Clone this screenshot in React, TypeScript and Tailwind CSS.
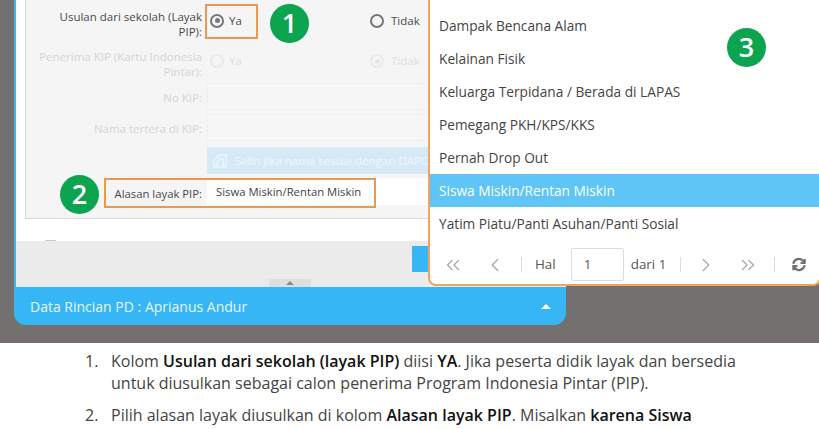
import React from "react";
import { ChevronLeft, ChevronRight, ChevronsLeft, ChevronsRight } from "lucide-react";

const FONT = "font-['Open_Sans','Noto_Sans',sans-serif]";

function Radio({ on, faded }: { on?: boolean; faded?: boolean }) {
  return (
    <span className={`flex h-[14px] w-[14px] shrink-0 items-center justify-center rounded-full border-2 ${faded ? "border-[#e9e9e9]" : "border-[#777777]"}`}>
      {on && <span className={`h-[5px] w-[5px] rounded-full ${faded ? "bg-[#e6e6e6]" : "bg-[#777777]"}`} />}
    </span>
  );
}

function Badge({ n, className }: { n: string; className: string }) {
  return (
    <div className={`absolute flex h-[39px] w-[39px] items-center justify-center rounded-full bg-[#0da44f] text-[27px] font-semibold text-white ${className}`}>
      {n}
    </div>
  );
}

function Row({ label, h, pt = "pt-[2px]", children, faded }: { label: React.ReactNode; h: string; pt?: string; children?: React.ReactNode; faded?: boolean }) {
  return (
    <div className={`flex items-center ${h}`}>
      <div className={`w-[176px] shrink-0 text-right text-[11.5px] leading-[15px] ${pt} ${faded ? "text-[#d4d4d4]" : "text-[#4a4a4a]"}`}>{label}</div>
      <div className="ml-[5px] flex-1 self-stretch">{children}</div>
    </div>
  );
}

const items = [
  "Dampak Bencana Alam",
  "Kelainan Fisik",
  "Keluarga Terpidana / Berada di LAPAS",
  "Pemegang PKH/KPS/KKS",
  "Pernah Drop Out",
  "Siswa Miskin/Rentan Miskin",
  "Yatim Piatu/Panti Asuhan/Panti Sosial",
];

function Sep() {
  return <span className="block h-[15px] w-px shrink-0 bg-[#dcdcdc]" />;
}

export default function App() {
  return (
    <div className={`relative h-[429px] w-[819px] overflow-hidden bg-white ${FONT}`}>
      <div className="relative h-[343px] bg-[#757070] pl-[14px]">
        <div className="flex h-[325px] w-[552px] flex-col overflow-hidden rounded-b-[12px] bg-[#36b6f4]">
          <div className="relative ml-[2px] h-[241px] bg-white pl-[9px]">
            <div className="h-[219px] border-b border-l border-[#d9d9d9] bg-[#f5f5f5]">
              <Row pt="pt-[5px]" label={<>Usulan dari sekolah (Layak<br />PIP):</>} h="h-[42px]">
                <div className="flex h-full items-center pb-[1px] pl-[3px] text-[11.5px] text-[#4a4a4a]">
                  <Radio on />
                  <span className="ml-[5px] w-[141px]">Ya</span>
                  <Radio />
                  <span className="ml-[7px]">Tidak</span>
                </div>
              </Row>
              <Row faded pt="pt-[4px]" label={<>Penerima KIP (Kartu Indonesia<br />Pintar):</>} h="h-[40px]">
                <div className="flex h-full items-center pb-[2px] pl-[3px] text-[11.5px] text-[#e0e0e0]">
                  <Radio faded />
                  <span className="ml-[5px] w-[141px]">Ya</span>
                  <Radio on faded />
                  <span className="ml-[7px]">Tidak</span>
                </div>
              </Row>
              <Row faded label="No KIP:" h="mt-[1px] h-[27px]">
                <div className="h-full border border-[#efefef] bg-[#f6f6f6]" />
              </Row>
              <Row faded label="Nama tertera di KIP:" h="mt-[4px] h-[27px]">
                <div className="h-full border border-[#efefef] bg-[#f6f6f6]" />
              </Row>
              <Row label="" h="mt-[6px] h-[27px]">
                <div className="flex h-full items-center bg-[#d5eaf6] pl-[6px] text-[11.5px] text-[#eef7fc]">
                  <svg width="15" height="15" viewBox="0 0 15 15" fill="none" stroke="#eef7fc" strokeWidth="1.3"><path d="M1 7 L6 2 H13 V14 H1 Z M4 14 V9 L7 6 H10 V14" /></svg>
                  <span className="ml-[7px] whitespace-nowrap">Salin jika nama sesuai dengan DAPODIK</span>
                </div>
              </Row>
              <Row pt="pt-[3px]" label={<span className="text-[11.3px]">Alasan layak PIP:</span>} h="mt-[4px] h-[27px]">
                <div className="flex h-full items-center bg-white pl-[9px] pt-[2px] text-[11.3px] text-[#444444]">Siswa Miskin/Rentan Miskin</div>
              </Row>
            </div>
            <div className="absolute bottom-0 left-[29px] h-[1px] w-[11px] rounded-t-full bg-[#c9c9c9]" />
          </div>
          <div className="relative ml-[2px] flex h-[46px] justify-end bg-[#ebebeb] pr-[138px] pt-[5px]">
            <div className="h-[26px] w-[16px] bg-[#36b6f4]" />
            <div className="absolute bottom-0 left-[253px] flex h-[8px] w-[42px] items-center justify-center bg-[#dfdfdf]">
              <span className="border-x-[4px] border-b-[4px] border-x-transparent border-b-[#8a8a8a]" />
            </div>
          </div>
          <div className="flex h-[38px] items-center justify-between pl-[16px] pr-[15px] text-[14px] text-[#e6f6fe]">
            <span>Data Rincian PD : Aprianus Andur</span>
            <span className="border-x-[5px] border-b-[5px] border-x-transparent border-b-white" />
          </div>
        </div>

        {/* orange annotations */}
        <div className="absolute left-[205px] top-[4px] h-[35px] w-[53px] border-2 border-[#ea9a4f]" />
        <div className="absolute left-[104px] top-[178px] h-[30px] w-[272px] border-2 border-[#ea9a4f]" />
        <Badge n="1" className="left-[270px] top-[4px]" />
        <Badge n="2" className="left-[60px] top-[175px]" />

        {/* dropdown */}
        <div className="absolute left-[428px] top-[-2px] h-[288px] w-[393px] rounded-b-[8px] border-2 border-[#f0a45f] bg-white pt-[9px]">
          {items.map((t, i) => (
            <div key={t} className={`flex h-[33px] items-center pl-[9px] pt-[1px] text-[13.7px] ${i === 5 ? "bg-[#5ec5f6] text-white" : "text-[#444444]"}`}>{t}</div>
          ))}
          <div className="mt-[8px] flex h-[33px] items-center text-[13.4px] text-[#555555]">
            <ChevronsLeft size={22} strokeWidth={1.5} className="ml-[12px] text-[#aaaaaa]" />
            <ChevronLeft size={22} strokeWidth={1.5} className="ml-[20px] text-[#aaaaaa]" />
            <span className="ml-[15px]"><Sep /></span>
            <span className="ml-[13px]">Hal</span>
            <span className="ml-[15px] flex h-[33px] w-[53px] items-center rounded-[2px] border border-[#dddddd] pl-[12px]">1</span>
            <span className="ml-[7px] whitespace-nowrap">dari 1</span>
            <span className="ml-[14px]"><Sep /></span>
            <ChevronRight size={22} strokeWidth={1.5} className="ml-[14px] text-[#aaaaaa]" />
            <ChevronsRight size={22} strokeWidth={1.5} className="ml-[20px] text-[#aaaaaa]" />
            <span className="ml-[15px]"><Sep /></span>
            <svg width="16" height="15" viewBox="0 0 24 24" fill="none" stroke="#6f6f6f" strokeWidth="3.4" className="ml-[16px]">
              <path d="M3 11 A9 9 0 0 1 19 6.5 L21 9 M21 3 V9.5 H14.5" />
              <path d="M21 13 A9 9 0 0 1 5 17.5 L3 15 M3 21 V14.5 H9.5" />
            </svg>
          </div>
        </div>
        <Badge n="3" className="left-[727px] top-[28px]" />
      </div>

      <ol className="pl-[85px] pt-[7px] text-[16px] leading-[22px] text-[#444444]">
        <li className="flex">
          <span className="w-[26px] shrink-0">1.</span>
          <span className="w-[640px]">Kolom <b className="font-semibold text-[#111111]">Usulan dari sekolah (layak PIP)</b> diisi <b className="font-semibold text-[#111111]">YA</b>. Jika peserta didik layak dan bersedia untuk diusulkan sebagai calon penerima Program Indonesia Pintar (PIP).</span>
        </li>
        <li className="mt-[10px] flex">
          <span className="w-[26px] shrink-0">2.</span>
          <span className="w-[640px]">Pilih alasan layak diusulkan di kolom <b className="font-semibold text-[#111111]">Alasan layak PIP</b>. Misalkan <b className="font-semibold text-[#111111]">karena Siswa Miskin/Rentan Miskin</b></span>
        </li>
      </ol>
    </div>
  );
}
